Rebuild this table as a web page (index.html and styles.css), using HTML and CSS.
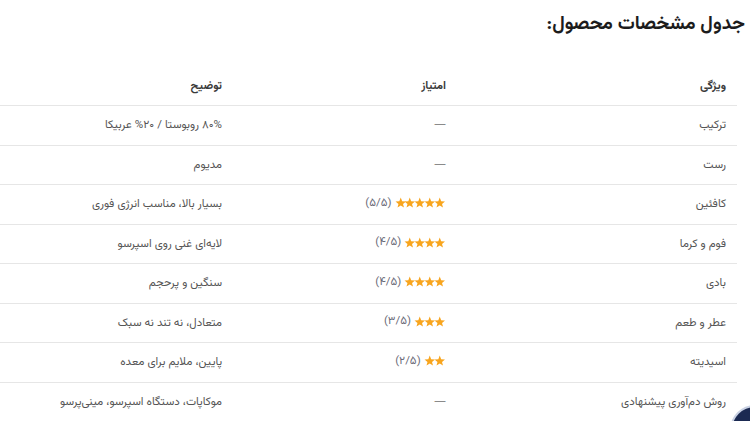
FILE: index.html
```html
<!DOCTYPE html>
<html lang="fa" dir="rtl">
<head>
<meta charset="utf-8">
<title>جدول مشخصات محصول</title>
<link rel="stylesheet" href="styles.css">
</head>
<body>
<svg class="defs" aria-hidden="true">
  <symbol id="star" viewBox="0 0 24 24"><path d="M12 1.3L14.94 8.76L22.94 9.25L16.76 14.35L18.76 22.1L12 17.8L5.24 22.1L7.24 14.35L1.06 9.25L9.06 8.76Z"/></symbol>
</svg>
<main class="page">
  <h2 class="title">جدول مشخصات محصول:</h2>
  <table class="spec">
    <colgroup>
      <col class="c-feature">
      <col class="c-rate">
      <col class="c-desc">
    </colgroup>
    <thead>
      <tr><th>ویژگی</th><th>امتیاز</th><th>توضیح</th></tr>
    </thead>
    <tbody>
      <tr><td>ترکیب</td><td><span class="dash">—</span></td><td>۸۰% روبوستا / ۲۰% عربیکا</td></tr>
      <tr><td>رست</td><td><span class="dash">—</span></td><td>مدیوم</td></tr>
      <tr><td>کافئین</td><td><span class="rating"><span class="stars"><svg viewBox="0 0 24 24"><use href="#star"/></svg><svg viewBox="0 0 24 24"><use href="#star"/></svg><svg viewBox="0 0 24 24"><use href="#star"/></svg><svg viewBox="0 0 24 24"><use href="#star"/></svg><svg viewBox="0 0 24 24"><use href="#star"/></svg></span><span class="score">(۵/۵)</span></span></td><td>بسیار بالا، مناسب انرژی فوری</td></tr>
      <tr><td>فوم و کرما</td><td><span class="rating"><span class="stars"><svg viewBox="0 0 24 24"><use href="#star"/></svg><svg viewBox="0 0 24 24"><use href="#star"/></svg><svg viewBox="0 0 24 24"><use href="#star"/></svg><svg viewBox="0 0 24 24"><use href="#star"/></svg></span><span class="score">(۴/۵)</span></span></td><td>لایه‌ای غنی روی اسپرسو</td></tr>
      <tr><td>بادی</td><td><span class="rating"><span class="stars"><svg viewBox="0 0 24 24"><use href="#star"/></svg><svg viewBox="0 0 24 24"><use href="#star"/></svg><svg viewBox="0 0 24 24"><use href="#star"/></svg><svg viewBox="0 0 24 24"><use href="#star"/></svg></span><span class="score">(۴/۵)</span></span></td><td>سنگین و پرحجم</td></tr>
      <tr><td>عطر و طعم</td><td><span class="rating"><span class="stars"><svg viewBox="0 0 24 24"><use href="#star"/></svg><svg viewBox="0 0 24 24"><use href="#star"/></svg><svg viewBox="0 0 24 24"><use href="#star"/></svg></span><span class="score">(۳/۵)</span></span></td><td>متعادل، نه تند نه سبک</td></tr>
      <tr><td>اسیدیته</td><td><span class="rating"><span class="stars"><svg viewBox="0 0 24 24"><use href="#star"/></svg><svg viewBox="0 0 24 24"><use href="#star"/></svg></span><span class="score">(۲/۵)</span></span></td><td>پایین، ملایم برای معده</td></tr>
      <tr><td>روش دم‌آوری پیشنهادی</td><td><span class="dash">—</span></td><td>موکاپات، دستگاه اسپرسو، مینی‌پرسو</td></tr>
    </tbody>
  </table>
</main>
<div class="fab"></div>
</body>
</html>
```
FILE: styles.css
```css
html, body {
  margin: 0;
  padding: 0;
  background: #ffffff;
}
body {
  direction: rtl;
  font-family: "Vazirmatn", "Noto Sans Arabic", "DejaVu Sans", sans-serif;
  color: #555555;
  overflow: hidden;
}
.defs {
  position: absolute;
  width: 0;
  height: 0;
  overflow: hidden;
}
.page {
  padding-top: 10px;
}
.title {
  margin: 0 5px 26px 0;
  font-size: 19px;
  line-height: 30px;
  font-weight: 700;
  color: #1c1c1c;
}
.spec {
  width: 737px;
  margin-right: 13px;
  border-collapse: collapse;
  table-layout: fixed;
  font-size: 11.5px;
}
.c-feature { width: 280px; }
.c-rate { width: 224px; }
.c-desc { width: 233px; }
.spec th,
.spec td {
  height: 39.5px;
  padding: 0 11px;
  text-align: right;
  vertical-align: middle;
  border-bottom: 1px solid #e6e6e6;
  box-sizing: border-box;
  white-space: nowrap;
}
.spec th {
  font-weight: 700;
  color: #3a3a3a;
}
.spec tbody tr:last-child td {
  border-bottom: none;
}
.dash {
  font-family: "DejaVu Sans", sans-serif;
  font-size: 12px;
  color: #8a8a8a;
}
.rating {
  display: inline-flex;
  align-items: center;
  gap: 5px;
}
.stars {
  display: inline-flex;
  align-items: center;
  margin-right: 1px;
}
.stars svg {
  display: block;
  width: 11.5px;
  height: 11.5px;
  margin-left: -1.8px;
  fill: #f8a51e;
}
.score {
  color: #6b6b78;
}
.fab {
  position: fixed;
  right: -30px;
  bottom: -34px;
  width: 46px;
  height: 46px;
  border-radius: 50%;
  background: #1b2a52;
  border: 2px solid #c9d1e3;
}
```
